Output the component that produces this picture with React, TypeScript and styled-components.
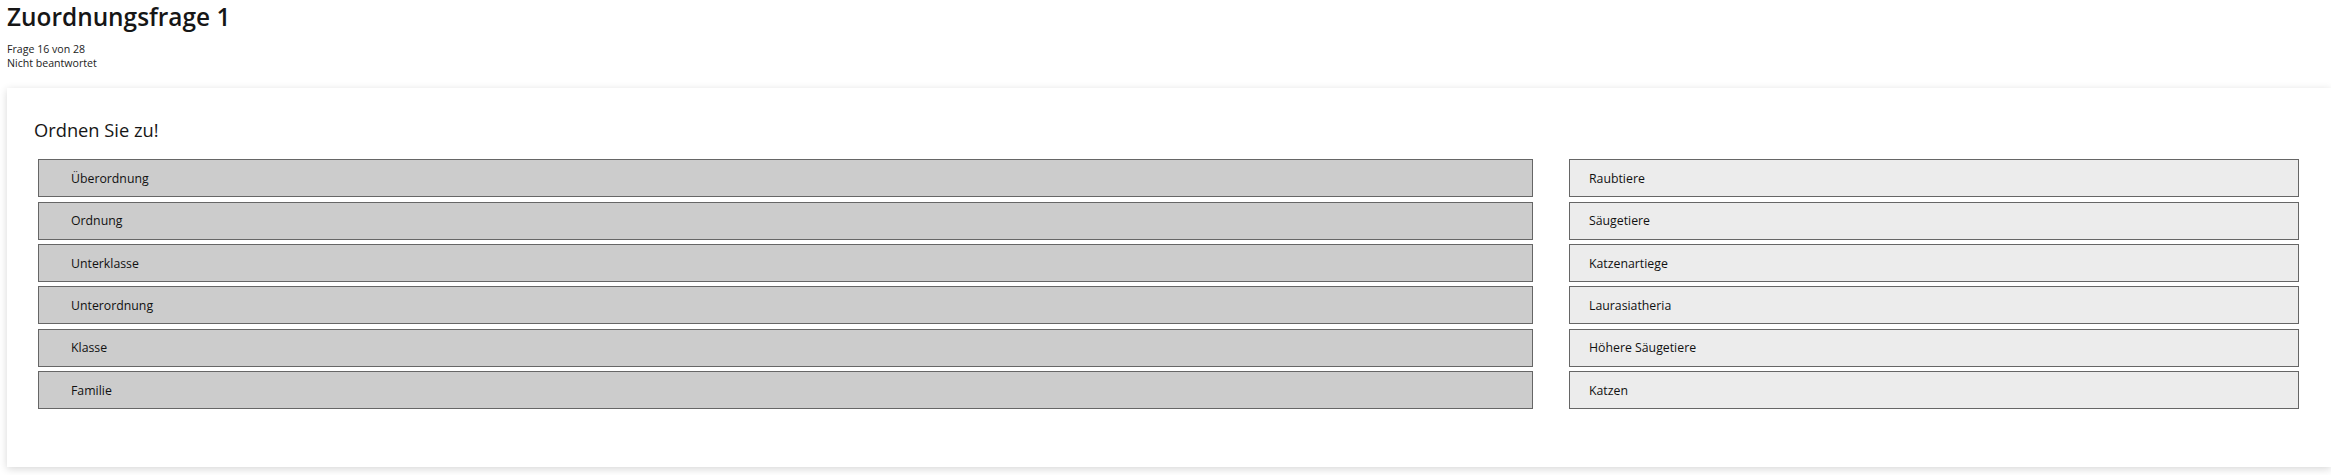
import styled, { createGlobalStyle } from "styled-components";

const GlobalStyle = createGlobalStyle`
  html, body {
    margin: 0;
    padding: 0;
    background: #ffffff;
    font-family: "Open Sans", "Liberation Sans", sans-serif;
    color: #1b1b1b;
    overflow: hidden;
  }
`;

const Page = styled.div`
  width: 2331px;
  height: 475px;
  padding-left: 7px;
  box-sizing: border-box;
`;

const Header = styled.header`
  display: flex;
  flex-direction: column;
`;

const Title = styled.h1`
  margin: 0;
  font-size: 24.4px;
  font-weight: 600;
  line-height: 33px;
  color: #161616;
`;

const Meta = styled.div`
  margin-top: 9px;
  font-size: 10.6px;
  line-height: 14.4px;
  color: #222;
`;

const Panel = styled.section`
  margin-top: 17px;
  height: 379px;
  box-sizing: border-box;
  padding: 29px 32px 0 27px;
  background: #fff;
  box-shadow: 0 2px 8px rgba(0, 0, 0, 0.16);
`;

const Question = styled.h2`
  margin: 0;
  font-size: 18.3px;
  font-weight: 400;
  line-height: normal;
  color: #161616;
`;

const Columns = styled.div`
  margin-top: 17.5px;
  margin-left: 4px;
  display: grid;
  grid-template-columns: 1495px 1fr;
  column-gap: 36px;
`;

const List = styled.div`
  display: flex;
  flex-direction: column;
  gap: 4.4px;
`;

const Item = styled.div<{ $target?: boolean }>`
  height: 38px;
  box-sizing: border-box;
  display: flex;
  align-items: center;
  padding-left: ${(p) => (p.$target ? "19px" : "32px")};
  border: 1px solid #666;
  background: ${(p) => (p.$target ? "#ececec" : "#cccccc")};
  font-size: 12.3px;
  color: #111;
`;

const terms = [
  "Überordnung",
  "Ordnung",
  "Unterklasse",
  "Unterordnung",
  "Klasse",
  "Familie",
];

const answers = [
  "Raubtiere",
  "Säugetiere",
  "Katzenartiege",
  "Laurasiatheria",
  "Höhere Säugetiere",
  "Katzen",
];

function App() {
  return (
    <>
      <GlobalStyle />
      <Page>
        <Header>
          <Title>Zuordnungsfrage 1</Title>
          <Meta>
            Frage 16 von 28
            <br />
            Nicht beantwortet
          </Meta>
        </Header>
        <Panel>
          <Question>Ordnen Sie zu!</Question>
          <Columns>
            <List>
              {terms.map((t) => (
                <Item key={t}>{t}</Item>
              ))}
            </List>
            <List>
              {answers.map((a) => (
                <Item key={a} $target>
                  {a}
                </Item>
              ))}
            </List>
          </Columns>
        </Panel>
      </Page>
    </>
  );
}

export default App;
